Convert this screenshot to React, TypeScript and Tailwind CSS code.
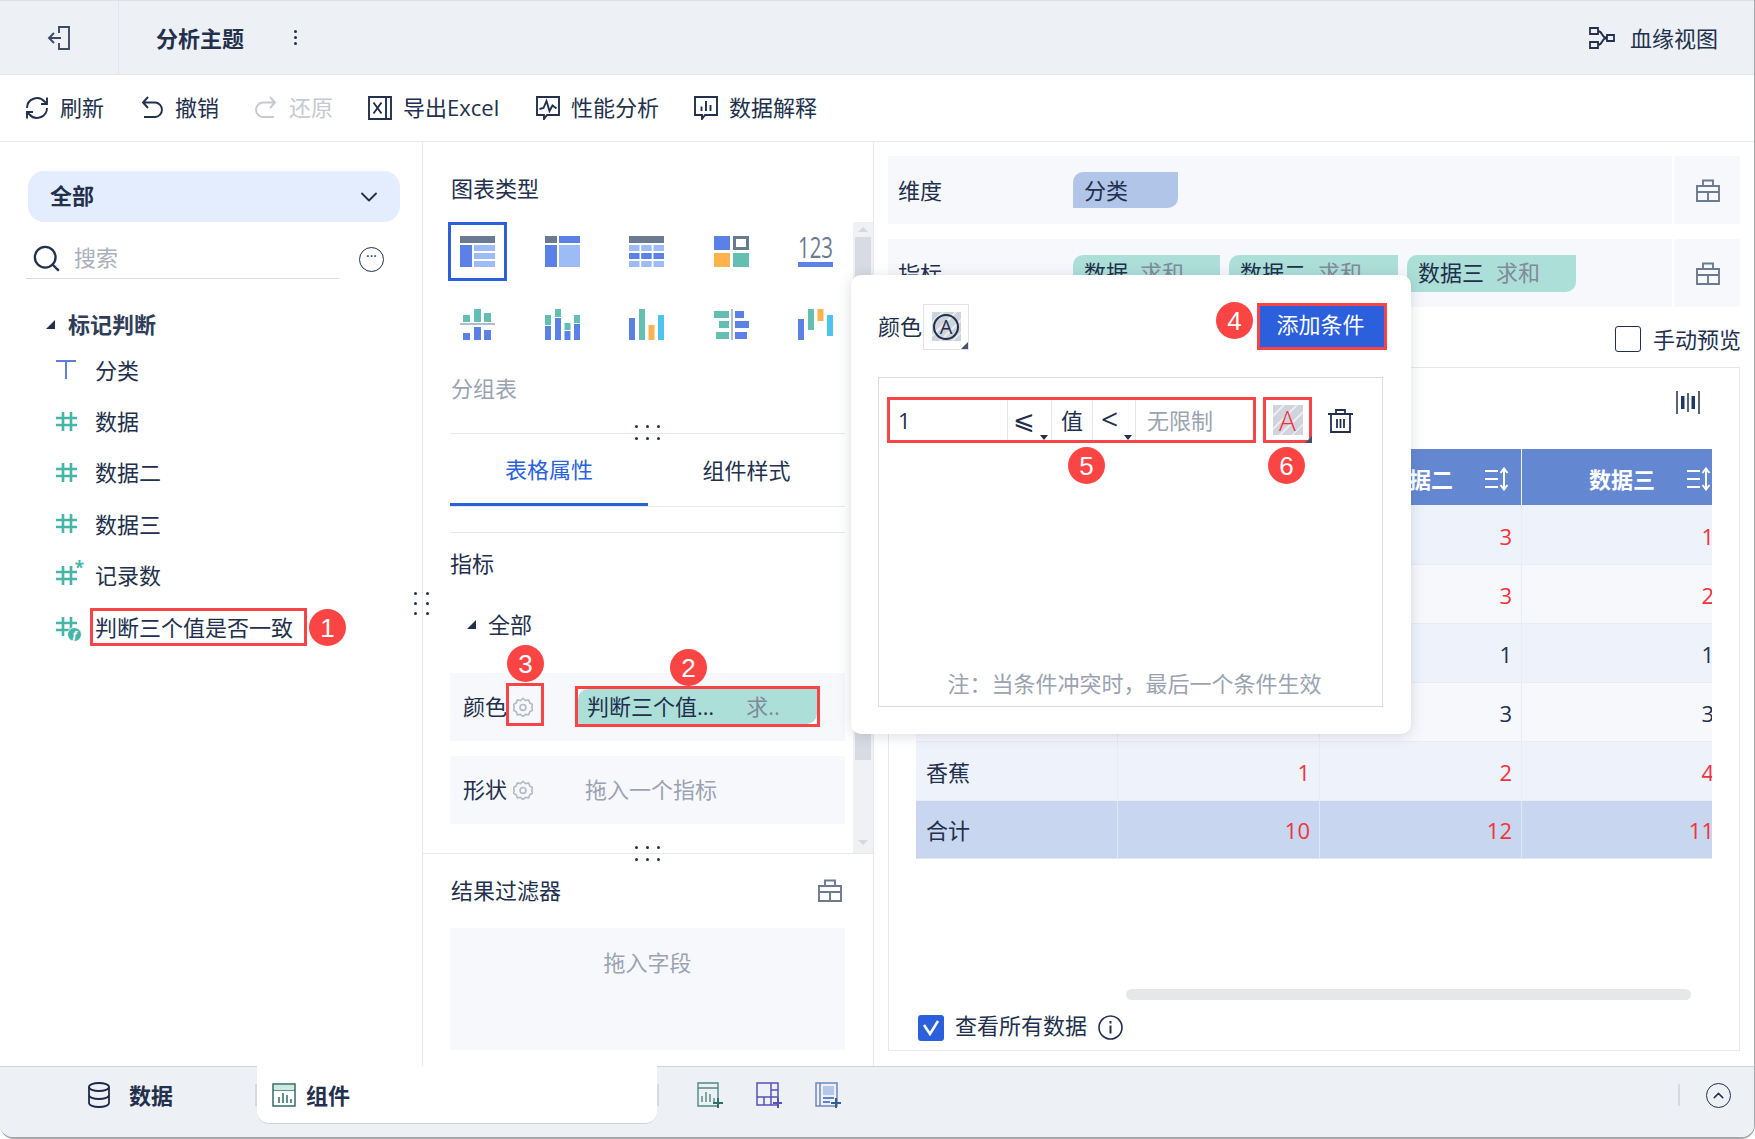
import { ChevronDown, Search } from "lucide-react";

const hatch =
  "bg-[repeating-linear-gradient(135deg,#cfd3db_0,#cfd3db_7px,#e9ebef_7px,#e9ebef_9px)]";

function Badge({ n, className }: { n: number; className: string }) {
  return (
    <div
      className={`absolute z-30 flex h-[37px] w-[37px] items-center justify-center rounded-full bg-[#fb4444] font-['Liberation_Sans',sans-serif] text-[26px] leading-none text-white ${className}`}
    >
      {n}
    </div>
  );
}

function Dots({ className }: { className: string }) {
  return (
    <div className={`absolute z-10 grid grid-cols-3 gap-x-[8px] gap-y-[9px] ${className}`}>
      {[0, 1, 2, 3, 4, 5].map((i) => (
        <span key={i} className="h-[3px] w-[3px] rounded-full bg-[#22304d]" />
      ))}
    </div>
  );
}

function Stroke({ size = 24, children, className = "" }: { size?: number; children: React.ReactNode; className?: string }) {
  return (
    <svg width={size} height={size} viewBox="0 0 24 24" fill="none" stroke="currentColor" strokeWidth="1.900" className={className}>
      {children}
    </svg>
  );
}

function ChartIcon({ i }: { i: number }) {
  const g = "#6b7a90", b = "#5b80e6", l = "#9dbcf5", t = "#63bfb2", o = "#fdb44e", c = "#4dc4f0";
  const R = (x: number, y: number, w: number, h: number, f: string) => <rect x={x} y={y} width={w} height={h} fill={f} />;
  const all: React.ReactNode[] = [
    <>{R(0, 0, 35, 7, g)}{R(0, 9, 12, 22, b)}{R(14, 9, 21, 6, l)}{R(14, 17, 21, 6, l)}{R(14, 25, 21, 6, l)}</>,
    <>{R(0, 0, 12, 7, g)}{R(14, 0, 21, 7, b)}{R(0, 9, 12, 22, b)}{R(14, 9, 21, 22, l)}</>,
    <>{R(0, 0, 35, 7, g)}{[0, 12.2, 24.5].map((x) => <g key={x}>{R(x, 9, 10.5, 6, l)}{R(x, 17, 10.5, 6, b)}{R(x, 25, 10.5, 6, l)}</g>)}</>,
    <>{R(0, 0, 16, 14, b)}<rect x="20.500" y="1.500" width="13" height="11" fill="none" stroke={g} strokeWidth="3" />{R(0, 17, 16, 14, o)}{R(19, 17, 16, 14, t)}</>,
    <><text x="0" y="22" fontSize="29" fill={g} fontFamily="Open Sans" textLength="35" lengthAdjust="spacingAndGlyphs">123</text>{R(0, 26, 35, 5, b)}</>,
    <>{R(3, 6, 7, 7, t)}{R(14, 0, 7, 13, t)}{R(24, 4, 7, 9, t)}{R(0, 14, 35, 2, "#b4bccb")}{R(3, 24, 7, 7, b)}{R(14, 18, 7, 13, b)}{R(24, 21, 7, 10, b)}</>,
    <>{R(0, 6, 6, 10, t)}{R(0, 17, 6, 14, b)}{R(10, 0, 6, 8, t)}{R(10, 9, 6, 22, b)}{R(19.5, 14, 6, 7, t)}{R(19.5, 22, 6, 9, b)}{R(29, 6, 6, 8, t)}{R(29, 15, 6, 16, b)}</>,
    <>{R(0, 9, 6, 22, b)}{R(10, 0, 6, 31, t)}{R(19.5, 16, 6, 15, o)}{R(29, 6, 6, 25, c)}</>,
    <>{R(17, 0, 2, 31, "#b4bccb")}{R(0, 2, 15, 7, t)}{R(5, 12, 10, 7, t)}{R(2, 23, 13, 7, t)}{R(21, 2, 9, 7, b)}{R(21, 12, 14, 7, b)}{R(21, 23, 12, 7, b)}</>,
    <>{R(0, 10, 6, 21, b)}{R(10, 0, 6, 21, t)}{R(19.5, 0, 6, 12, o)}{R(29, 6, 6, 21, c)}</>,
  ];
  return <svg width="35" height="31" viewBox="0 0 35 31" className="overflow-visible">{all[i]}</svg>;
}

function Gear() {
  return (
    <svg width="20" height="20" viewBox="0 0 24 24" fill="none" stroke="#b3bac8" strokeWidth="2">
      <path d="M12 1.500l3 2.700 3.800-.6 1.300 3.600 3.400 1.800-1 3.500 1 3.500-3.400 1.800-1.300 3.600-3.800-.6-3 2.700-3-2.700-3.800.6-1.300-3.600L.5 16l1-3.500-1-3.500 3.400-1.800 1.300-3.600 3.800.6z" />
      <circle cx="12" cy="12.500" r="3.500" />
    </svg>
  );
}

function GroupIcon() {
  return (
    <svg width="24" height="23" viewBox="0 0 24 23" fill="none" stroke="#6b7a90" strokeWidth="1.900">
      <path d="M1 7h22v15H1zM7 7V1.500h10V7M1 13h22M12 13v9" />
    </svg>
  );
}

function Hash() {
  return (
    <svg width="21" height="21" viewBox="0 0 21 21" fill="none" stroke="#45b6a6" strokeWidth="2.600">
      <path d="M7 1v19M15 1v19M0 7h21M0 14h21" />
    </svg>
  );
}

function SortIcon() {
  return (
    <svg width="25" height="24" viewBox="0 0 25 24" fill="none" stroke="#fff" strokeWidth="2">
      <path d="M0 4h13M0 12h13M0 20h13M19 23V2M15.500 6L19 1.500 22.500 6M15.500 18l3.500 4.500 3.500-4.500" />
    </svg>
  );
}

function Corner({ className = "" }: { className?: string }) {
  return <span className={`absolute h-0 w-0 border-b-[7px] border-l-[7px] border-b-[#45516b] border-l-transparent ${className}`} />;
}

function DownTri({ className = "" }: { className?: string }) {
  return <span className={`absolute h-0 w-0 border-x-[4px] border-t-[5px] border-x-transparent border-t-[#22304d] ${className}`} />;
}

const tools = [
  { label: "刷新", width: "w-[115px]", icon: <Stroke><path d="M2 12a10 10 0 0 1 17.500-6.500L22 8M22 12a10 10 0 0 1-17.500 6.500L2 16M22 1.500V8h-6M2 22.500V16h6" /></Stroke> },
  { label: "撤销", width: "w-[114px]", icon: <Stroke><path d="M8 1L3 6.500 8 12M3 6.500h12.500a7.300 7.300 0 0 1 0 14.500H4" /></Stroke> },
  { label: "还原", width: "w-[114px]", muted: true, icon: <Stroke><path d="M16 1l5 5.500L16 12M21 6.500H8.500a7.300 7.300 0 0 0 0 14.500H20" /></Stroke> },
  { label: "导出Excel", width: "w-[168px]", icon: <Stroke><path d="M18 1H1v22h17M18 1h5v22h-5M18 1v22M5.500 6.500l8 11M13.500 6.500l-8 11" /></Stroke> },
  { label: "性能分析", width: "w-[158px]", icon: <Stroke><path d="M1 1h22v18H11l-3 4v-4H1zM3.500 13l4-1L10.500 5l3 10 3-5.500 4 3" /></Stroke> },
  { label: "数据解释", width: "", icon: <Stroke><path d="M1 1h22v18H11l-3 4v-4H1zM7.500 10.500V15M12 5v10M16.500 9v6" /></Stroke> },
];

const fields = [
  { label: "分类", icon: <svg width="21" height="21" viewBox="0 0 21 21" fill="none" stroke="#5b80d6" strokeWidth="2"><path d="M0 2h20M10 2v18" /></svg> },
  { label: "数据", icon: <Hash /> },
  { label: "数据二", icon: <Hash /> },
  { label: "数据三", icon: <Hash /> },
  {
    label: "记录数",
    icon: (
      <span className="relative block w-[21px]">
        <Hash />
        <span className="absolute -right-[7px] -top-[6px] text-[17px] font-bold leading-none text-[#45b6a6]">*</span>
      </span>
    ),
  },
  {
    label: "判断三个值是否一致",
    icon: (
      <span className="relative block w-[21px]">
        <Hash />
        <span className="absolute -bottom-[5px] -right-[5px] flex h-[15px] w-[15px] items-center justify-center rounded-full border border-white bg-[#45b6a6] text-[11px] font-bold italic leading-none text-white">f</span>
      </span>
    ),
  },
];

const rows = [
  { name: "", cells: ["", "", "3", "1"], red: true, bg: "bg-[#eef2fb]" },
  { name: "", cells: ["", "", "3", "2"], red: true, bg: "bg-[#f7f8fc]" },
  { name: "", cells: ["", "", "1", "1"], red: false, bg: "bg-[#eef2fb]" },
  { name: "", cells: ["", "", "3", "3"], red: false, bg: "bg-[#f7f8fc]" },
  { name: "香蕉", cells: ["", "1", "2", "4"], red: true, bg: "bg-[#eef2fb]" },
];

function Pill({ name, className }: { name: string; className: string }) {
  return (
    <div className={`flex h-[37px] items-center rounded-tl-[10px] rounded-br-[10px] bg-[#addfd9] pb-[3px] pl-[11px] ${className}`}>
      <span>{name}</span>
      <span className="ml-[12px] text-[#7f8a9a]">求和</span>
    </div>
  );
}

export default function App() {
  return (
    <div className="relative h-[1139px] w-[1755px] overflow-hidden bg-white font-['Open_Sans','Noto_Sans_CJK_SC',sans-serif] text-[22px] leading-[32px] text-[#22304d]">
      <div className="flex h-full flex-col overflow-hidden rounded-b-[14px] border-r border-b-2 border-[#a5a7ab]">
        {/* top bar */}
        <header className="flex h-[75px] shrink-0 items-center border-t border-b border-t-[#dcdfe3] border-b-[#e3e5ea] bg-[#edf0f5]">
          <div className="flex h-full w-[119px] items-center border-r border-[#e3e6ec] pl-[47px]">
            <svg width="24" height="24" viewBox="0 0 24 24" fill="none" stroke="#3c4a66" strokeWidth="1.900">
              <path d="M12 7V1h10v22H12v-6M14 12H2M7 7l-5 5 5 5" />
            </svg>
          </div>
          <span className="ml-[37px] font-bold">分析主题</span>
          <div className="ml-[50px] flex flex-col gap-[3px]">
            <span className="h-[3px] w-[3px] rounded-full bg-[#22304d]" />
            <span className="h-[3px] w-[3px] rounded-full bg-[#22304d]" />
            <span className="h-[3px] w-[3px] rounded-full bg-[#22304d]" />
          </div>
          <div className="ml-auto flex items-center pr-[36px]">
            <svg width="26" height="22" viewBox="0 0 26 22" fill="none" stroke="#22304d" strokeWidth="1.800">
              <path d="M1 1h8v6H1zM1 15h8v6H1zM18 8h7v6h-7zM9 4c5 0 3 7 9 7M9 18c5 0 3-7 9-7" />
            </svg>
            <span className="ml-[15px]">血缘视图</span>
          </div>
        </header>

        {/* toolbar */}
        <div className="flex h-[67px] shrink-0 items-center border-b border-[#e6e7eb] pl-[25px]">
          {tools.map((t) => (
            <div key={t.label} className={`flex items-center gap-[11px] ${t.width} ${t.muted ? "text-[#c4c9d2]" : ""}`}>
              {t.icon}
              <span className="pb-[2px]">{t.label}</span>
            </div>
          ))}
        </div>

        {/* main */}
        <div className="flex min-h-0 flex-1">
          {/* fields */}
          <aside className="w-[423px] shrink-0 border-r border-[#e6e8ef] pt-[29px]">
            <div className="ml-[28px] flex h-[51px] w-[372px] items-center justify-between rounded-[16px] bg-[#e3edfd] pl-[22px] pr-[17px]">
              <span className="pb-[3px] font-bold">全部</span>
              <ChevronDown size={28} strokeWidth={1.600} />
            </div>
            <div className="flex items-end">
              <div className="ml-[26px] mt-[16px] flex h-[41px] w-[313px] items-center border-b border-[#d9dbe0] pl-[5px] text-[#aab0bc]">
                <Search size={31} strokeWidth={1.800} className="text-[#22304d]" />
                <span className="ml-[12px] pb-[2px]">搜索</span>
              </div>
              <div className="mb-[7px] ml-[20px] flex h-[25px] w-[25px] items-center justify-center rounded-full border border-[#22304d] pb-[8px] text-[14px] leading-none">
                ···
              </div>
            </div>
            <div className="mt-[22px] flex h-[43px] items-center pl-[46px] pt-[3px] text-[#2f3d5a]">
              <span className="h-0 w-0 border-b-[9px] border-l-[9px] border-b-[#22304d] border-l-transparent" />
              <span className="ml-[13px] font-semibold">标记判断</span>
            </div>
            {fields.map((f) => (
              <div key={f.label} className="flex h-[51.400px] items-center pl-[56px]">
                <span className="w-[39px]">{f.icon}</span>
                <span>{f.label}</span>
              </div>
            ))}
          </aside>

          {/* config */}
          <section className="flex w-[451px] shrink-0 flex-col border-r border-[#e6e8ef]">
            <div className="flex h-[712px] shrink-0 border-b border-[#e6e8ef]">
              <div className="w-[430px] pl-[27px] pt-[30px]">
                <div className="h-[32px] pl-[1px]">图表类型</div>
                <div className="-ml-[2px] mt-[18px] grid w-[400px] grid-cols-[repeat(5,59px)] gap-x-[25.500px] gap-y-[14px]">
                  {[0, 1, 2, 3, 4, 5, 6, 7, 8, 9].map((i) => (
                    <div key={i} className={`flex h-[59px] w-[59px] items-center justify-center ${i === 0 ? "border-[3px] border-[#2b5fdb]" : ""}`}>
                      <ChartIcon i={i} />
                    </div>
                  ))}
                </div>
                <div className="mt-[18px] pl-[1px] text-[#9aa3b2]">分组表</div>
                <div className="mt-[29px] h-px w-[395px] bg-[#e6e8ef]" />
                <div className="flex h-[73px] w-[395px] border-b border-[#e6e8ef]">
                  <div className="flex w-[198px] items-center justify-center border-b-[3px] border-[#2b5fdb] text-[#2b5fdb]">表格属性</div>
                  <div className="flex w-[197px] items-center justify-center">组件样式</div>
                </div>
                <div className="mt-[25px] h-px w-[395px] bg-[#e6e8ef]" />
                <div className="mt-[14px]">指标</div>
                <div className="mt-[29px] flex items-center pl-[17px]">
                  <span className="h-0 w-0 border-b-[9px] border-l-[9px] border-b-[#22304d] border-l-transparent" />
                  <span className="ml-[12px]">全部</span>
                </div>
                <div className="relative mt-[33px] flex h-[68px] w-[395px] items-center bg-[#f7f8fc] pl-[13px]">
                  <span className="pb-[2px]">颜色</span>
                  <span className="ml-[6px] flex"><Gear /></span>
                  <div className="absolute left-[125px] top-[13px] flex h-[41px] w-[245px] items-center border-[3px] border-[#f74446] bg-white">
                    <div className="flex h-[35px] w-[239px] items-center rounded-tl-[10px] rounded-br-[10px] bg-[#addfd9] pl-[9px]">
                      <span className="pb-[1px]">判断三个值…</span>
                      <span className="ml-[32px] pb-[1px] text-[#7f8a9a]">求..</span>
                    </div>
                  </div>
                  <div className="absolute left-[56px] top-[10px] h-[43px] w-[38px] border-[3px] border-[#f74446]" />
                </div>
                <div className="mt-[15px] flex h-[68px] w-[395px] items-center bg-[#f7f8fc] pl-[13px]">
                  <span className="pb-[2px]">形状</span>
                  <span className="ml-[6px] flex"><Gear /></span>
                  <span className="ml-[52px] pb-[2px] text-[#9aa3b2]">拖入一个指标</span>
                </div>
              </div>
              <div className="mt-[80px] flex w-[20px] flex-col items-center bg-[#f0f1f4]">
                <span className="mt-[5px] h-0 w-0 border-x-[5px] border-b-[5px] border-x-transparent border-b-[#d5d8de]" />
                <div className="mt-[5px] h-[523px] w-[16px] bg-[#d8dbe1]" />
                <span className="mt-[80px] h-0 w-0 border-x-[5px] border-t-[5px] border-x-transparent border-t-[#d5d8de]" />
              </div>
            </div>
            <div className="pl-[27px] pt-[20px]">
              <div className="flex h-[32px] w-[392px] items-center justify-between">
                <span className="pl-[1px]">结果过滤器</span>
                <GroupIcon />
              </div>
              <div className="mt-[22px] h-[122px] w-[395px] bg-[#f7f8fc] pt-[18px] text-center text-[#9aa3b2]">拖入字段</div>
            </div>
          </section>

          {/* preview */}
          <section className="min-w-0 flex-1 pl-[14px] pr-[14px] pt-[14px]">
            <div className="flex h-[68px] bg-[#f7f8fc]">
              <div className="flex w-[174px] items-center pl-[10px]">维度</div>
              <div className="ml-[2px] flex w-[610px] items-center border-r-[2px] border-white pl-[9px]">
                <div className="flex h-[36px] w-[105px] items-center rounded-tl-[10px] rounded-br-[10px] bg-[#b0c5e8] pl-[11px]">分类</div>
              </div>
              <div className="flex flex-1 items-center justify-center pl-[2px]"><GroupIcon /></div>
            </div>
            <div className="mt-[15px] flex h-[68px] bg-[#f7f8fc]">
              <div className="flex w-[174px] items-center pl-[10px]">指标</div>
              <div className="ml-[2px] flex w-[610px] items-center gap-[9px] border-r-[2px] border-white pl-[9px]">
                <Pill name="数据" className="w-[147px]" />
                <Pill name="数据二" className="w-[169px]" />
                <Pill name="数据三" className="w-[169px]" />
              </div>
              <div className="flex flex-1 items-center justify-center pl-[2px]"><GroupIcon /></div>
            </div>
            <div className="flex h-[60px] items-center justify-end pt-[3px]">
              <span className="h-[26px] w-[26px] rounded-[3px] border border-[#22304d]" />
              <span className="-mr-[1px] ml-[12px]">手动预览</span>
            </div>
            <div className="h-[684px] border border-[#e6e8ef]">
              <div className="flex h-[81px] justify-end pr-[39px] pt-[23px]">
                <svg width="24" height="23" viewBox="0 0 24 23">
                  <path d="M1 0v23M23 0v23M12 2v19" stroke="#22304d" strokeWidth="1.500" />
                  <path d="M5 5h3.500v13H5zM15.500 5H19v13h-3.500z" fill="#1d3a66" />
                </svg>
              </div>
              <div className="ml-[27px] w-[796px] overflow-hidden">
                <div className="grid w-[808px] grid-cols-[repeat(4,202px)]">
                  {["分类", "数据", "数据二", "数据三"].map((h, i) => (
                    <div key={h} className="flex h-[57px] items-center border-r border-b border-[#f2f4f9] bg-[#6487d1] pt-[3px] font-bold text-white">
                      {i === 0 ? <span className="pl-[11px]">{h}</span> : null}
                      {i > 0 ? <span className="w-[165px] pl-[67px]">{h}</span> : null}
                      {i > 0 ? <SortIcon /> : null}
                    </div>
                  ))}
                  {rows.map((r, ri) => (
                    <div key={ri} className="contents">
                      <div className={`flex h-[59px] items-center border-r border-b border-[#e8ecf5] pl-[10px] pt-[1px] ${r.bg}`}>{r.name}</div>
                      {r.cells.slice(1).map((v, ci) => (
                        <div key={ci} className={`flex h-[59px] items-center justify-end border-r border-b border-[#e8ecf5] pr-[9px] pt-[1px] ${r.bg} ${r.red ? "text-[#f0333b]" : ""}`}>{v}</div>
                      ))}
                    </div>
                  ))}
                  <div className="flex h-[58px] items-center border-r border-b border-[#e0e6f3] bg-[#c8d6ef] pl-[10px]">合计</div>
                  {["10", "12", "11"].map((v) => (
                    <div key={v} className="flex h-[58px] items-center justify-end border-r border-b border-[#e0e6f3] bg-[#c8d6ef] pr-[9px] text-[#f0333b]">{v}</div>
                  ))}
                </div>
              </div>
              <div className="ml-[237px] mt-[130px] h-[11px] w-[565px] rounded-full bg-[#e6e7e9]" />
              <div className="ml-[29px] mt-[9px] flex items-center">
                <span className="flex h-[26px] w-[26px] items-center justify-center rounded-[3px] bg-[#2b5fdb]">
                  <svg width="18" height="16" viewBox="0 0 18 16" fill="none" stroke="#fff" strokeWidth="2.500"><path d="M2 5l6 9L16 1" /></svg>
                </span>
                <span className="ml-[11px] pb-[5px]">查看所有数据</span>
                <svg className="ml-[11px]" width="25" height="25" viewBox="0 0 25 25" fill="none" stroke="#22304d" strokeWidth="1.600">
                  <circle cx="12.500" cy="12.500" r="11.500" />
                  <path d="M12.500 10.500v8M12.500 6v2.500" strokeWidth="2" />
                </svg>
              </div>
            </div>
          </section>
        </div>

        {/* bottom bar */}
        <footer className="flex h-[71px] shrink-0 items-start border-t border-[#cfd3dc] bg-[#edf0f5]">
          <div className="flex h-[56px] w-[257px] items-center pl-[88px]">
            <svg width="22" height="26" viewBox="0 0 22 26" fill="none" stroke="#1d2b49" strokeWidth="1.800">
              <ellipse cx="11" cy="5" rx="10" ry="4" />
              <path d="M1 5v16c0 2.200 4.500 4 10 4s10-1.800 10-4V5M1 13c0 2.200 4.500 4 10 4s10-1.800 10-4" />
            </svg>
            <span className="ml-[19px] font-bold">数据</span>
            <span className="ml-auto h-[22px] w-[2px] bg-[#d6d9df]" />
          </div>
          <div className="-mt-px flex h-[58px] w-[400px] items-center rounded-b-[12px] border-b border-[#cfd3dc] bg-white pl-[15px]">
            <svg width="24" height="24" viewBox="0 0 24 24" fill="none" stroke="#2f6f69" strokeWidth="1.500">
              <path d="M1 1h22v22H1zM1 7h22" />
              <path d="M2 2h20v5H2z" fill="#cfe8e3" stroke="none" />
              <path d="M7 20v-6M11 20V10M15 20v-8M19 20v-4" />
            </svg>
            <span className="ml-[10px] font-bold">组件</span>
          </div>
          <div className="flex h-[56px] items-center">
            <span className="h-[22px] w-[2px] bg-[#d6d9df]" />
            <div className="ml-[38px] flex items-center gap-[33px]">
              <svg width="26" height="26" viewBox="0 0 26 26" fill="none" stroke="#4f8a80" strokeWidth="1.400">
                <path d="M1 1h20v23H1zM1 6h20" />
                <path d="M5 20v-6M9 20V10M13 20v-8M17 20v-4" />
                <path d="M21 16v10M16 21h10" stroke="#2f6f69" strokeWidth="2" />
              </svg>
              <svg width="26" height="26" viewBox="0 0 26 26" fill="none" stroke="#5a4fb5" strokeWidth="1.500">
                <path d="M1 1h21v22H1zM15 1v15M1 15h21M15 8h7M8 15v8M15 15v8" />
                <path d="M22 16v10M17 21h9" strokeWidth="2" />
              </svg>
              <svg width="26" height="26" viewBox="0 0 26 26" fill="none" stroke="#6d86bd" strokeWidth="1.500">
                <path d="M1 1h21v23H1zM5 1v23" />
                <path d="M8 4h11v9H8z" fill="#b5c7e8" stroke="none" />
                <path d="M8 16h11M8 20h7" stroke="#5b80d6" strokeWidth="2" />
                <path d="M21 16v10M16 21h10" stroke="#2f5f8a" strokeWidth="2" />
              </svg>
            </div>
          </div>
          <div className="ml-auto flex h-[56px] items-center pr-[23px]">
            <span className="h-[22px] w-[2px] bg-[#d6d9df]" />
            <span className="ml-[26px] flex h-[25px] w-[25px] items-center justify-center rounded-full border-[1.500px] border-[#22304d]">
              <ChevronDown size={17} strokeWidth={2} className="rotate-180" />
            </span>
          </div>
        </footer>
      </div>

      {/* popover */}
      <div className="absolute left-[851px] top-[275px] z-20 h-[459px] w-[560px] rounded-[10px] bg-white pt-[28px] shadow-[0_2px_14px_rgba(60,70,100,0.18)]">
        <div className="flex items-center pl-[27px] pr-[24px]">
          <span className="pb-[2px]">颜色</span>
          <div className="relative ml-[1px] flex h-[46px] w-[46px] items-center justify-center border border-[#e0e3ea]">
            <div className={`flex h-[29px] w-[29px] items-center justify-center ${hatch}`}>
              <span className="flex h-[26px] w-[26px] items-center justify-center rounded-full border-2 border-[#22304d] text-[20px] leading-none">A</span>
            </div>
            <Corner className="bottom-0 right-0" />
          </div>
          <div className="ml-auto flex h-[47px] w-[130px] items-center justify-center border-[3px] border-[#f74446] bg-[#2b5fdb] pb-[5px] pr-[3px] text-white">添加条件</div>
        </div>
        <div className="ml-[27px] mt-[27px] h-[330px] w-[505px] border border-[#d8dbe5] pl-[8px] pt-[19px]">
          <div className="flex items-start">
            <div className="flex h-[46px] w-[369px] border-[3px] border-[#f74446]">
              <div className="flex w-[117px] items-center pl-[8px]">1</div>
              <div className="relative flex w-[44px] items-center justify-center border-l border-[#e3e5ec] pr-[11px] font-['DejaVu_Sans',sans-serif] text-[26px]">⩽<DownTri className="bottom-0 right-[3px]" /></div>
              <div className="flex w-[41px] items-center justify-center border-l border-[#e3e5ec]">值</div>
              <div className="relative flex w-[43px] items-center justify-center border-l border-[#e3e5ec] pb-[3px] pr-[9px] text-[30px]">&lt;<DownTri className="bottom-0 right-[3px]" /></div>
              <div className="flex flex-1 items-center border-l border-[#e3e5ec] pl-[11px] text-[#9aa3b2]">无限制</div>
            </div>
            <div className="relative ml-[7px] flex h-[46px] w-[49px] items-center justify-center border-[3px] border-[#f74446]">
              <div className={`flex h-[30px] w-[30px] items-center justify-center text-[28px] font-light leading-none text-[#f0333b] ${hatch}`}>A</div>
              <Corner className="-bottom-[3px] -right-[3px]" />
            </div>
            <svg className="ml-[16px] mt-[12px]" width="25" height="24" viewBox="0 0 25 24" fill="none" stroke="#22304d" strokeWidth="1.800">
              <path d="M0 5h25M8 5V1h9v4M3 5v18h19V5M9 10v9M12.500 10v9M16 10v9" />
            </svg>
          </div>
          <div className="mt-[224px] text-center text-[#9aa3b2]">{"注\uFF1A当条件冲突时\uFF0C最后一个条件生效"}</div>
        </div>
      </div>

      {/* annotations */}
      <div className="absolute left-[90px] top-[608px] h-[38px] w-[217px] border-[3px] border-[#f74446]" />
      <Badge n={1} className="left-[309px] top-[609px]" />
      <Badge n={2} className="left-[670px] top-[649px]" />
      <Badge n={3} className="left-[507px] top-[645px]" />
      <Badge n={4} className="left-[1216px] top-[302px]" />
      <Badge n={5} className="left-[1068px] top-[447px]" />
      <Badge n={6} className="left-[1268px] top-[447px]" />

      <Dots className="left-[635px] top-[425px]" />
      <Dots className="left-[635px] top-[846px]" />
      <div className="absolute left-[414px] top-[592px] z-10 grid grid-cols-2 gap-x-[9px] gap-y-[7px]">
        {[0, 1, 2, 3, 4, 5].map((i) => (
          <span key={i} className="h-[3px] w-[3px] rounded-full bg-[#22304d]" />
        ))}
      </div>
    </div>
  );
}
